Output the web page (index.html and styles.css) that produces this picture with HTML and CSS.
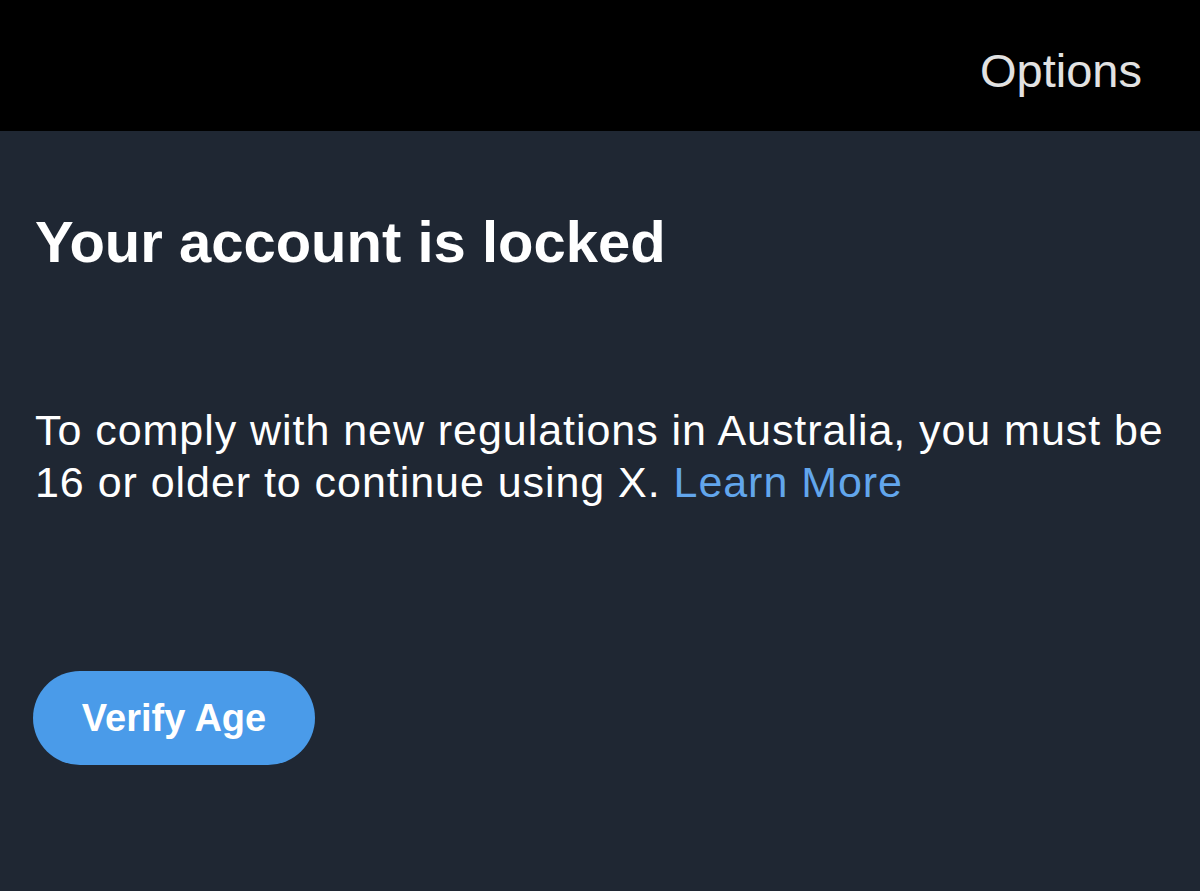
FILE: index.html
```html
<!DOCTYPE html>
<html>
<head>
<meta charset="utf-8">
<link rel="stylesheet" href="styles.css">
</head>
<body>
<div class="topbar"><span class="options">Options</span></div>
<main class="content">
  <h1 class="title">Your account is locked</h1>
  <p class="message">To comply with new regulations in Australia, you must be 16 or older to continue using X. <a class="link" href="#">Learn More</a></p>
  <button class="verify">Verify Age</button>
</main>
</body>
</html>
```
FILE: styles.css
```css
html, body {
  margin: 0;
  padding: 0;
  height: 100%;
}
body {
  background: #1f2733;
  font-family: "Liberation Sans", Arial, sans-serif;
  color: #ffffff;
  overflow: hidden;
}
.topbar {
  height: 131px;
  background: #000000;
  display: flex;
  justify-content: flex-end;
  align-items: center;
  padding: 10px 58px 0 0;
  box-sizing: border-box;
}
.options {
  font-size: 47px;
  line-height: 1;
  color: #e2e2e2;
}
.content {
  padding: 0 0 0 35px;
  display: flex;
  flex-direction: column;
  align-items: flex-start;
}
.title {
  margin: 76px 0 0 0;
  font-size: 58px;
  line-height: 70px;
  font-weight: bold;
  color: #ffffff;
}
.message {
  margin: 127px 0 0 0;
  font-size: 43px;
  letter-spacing: 0.95px;
  line-height: 52px;
  color: #ffffff;
  width: 1150px;
}
.link {
  color: #62a6ec;
  text-decoration: none;
}
.verify {
  margin: 163px 0 0 -2px;
  width: 282px;
  height: 94px;
  border: none;
  border-radius: 47px;
  background: #4a9be9;
  color: #ffffff;
  font-family: "Liberation Sans", Arial, sans-serif;
  font-size: 38px;
  font-weight: bold;
  padding: 0;
}
```
